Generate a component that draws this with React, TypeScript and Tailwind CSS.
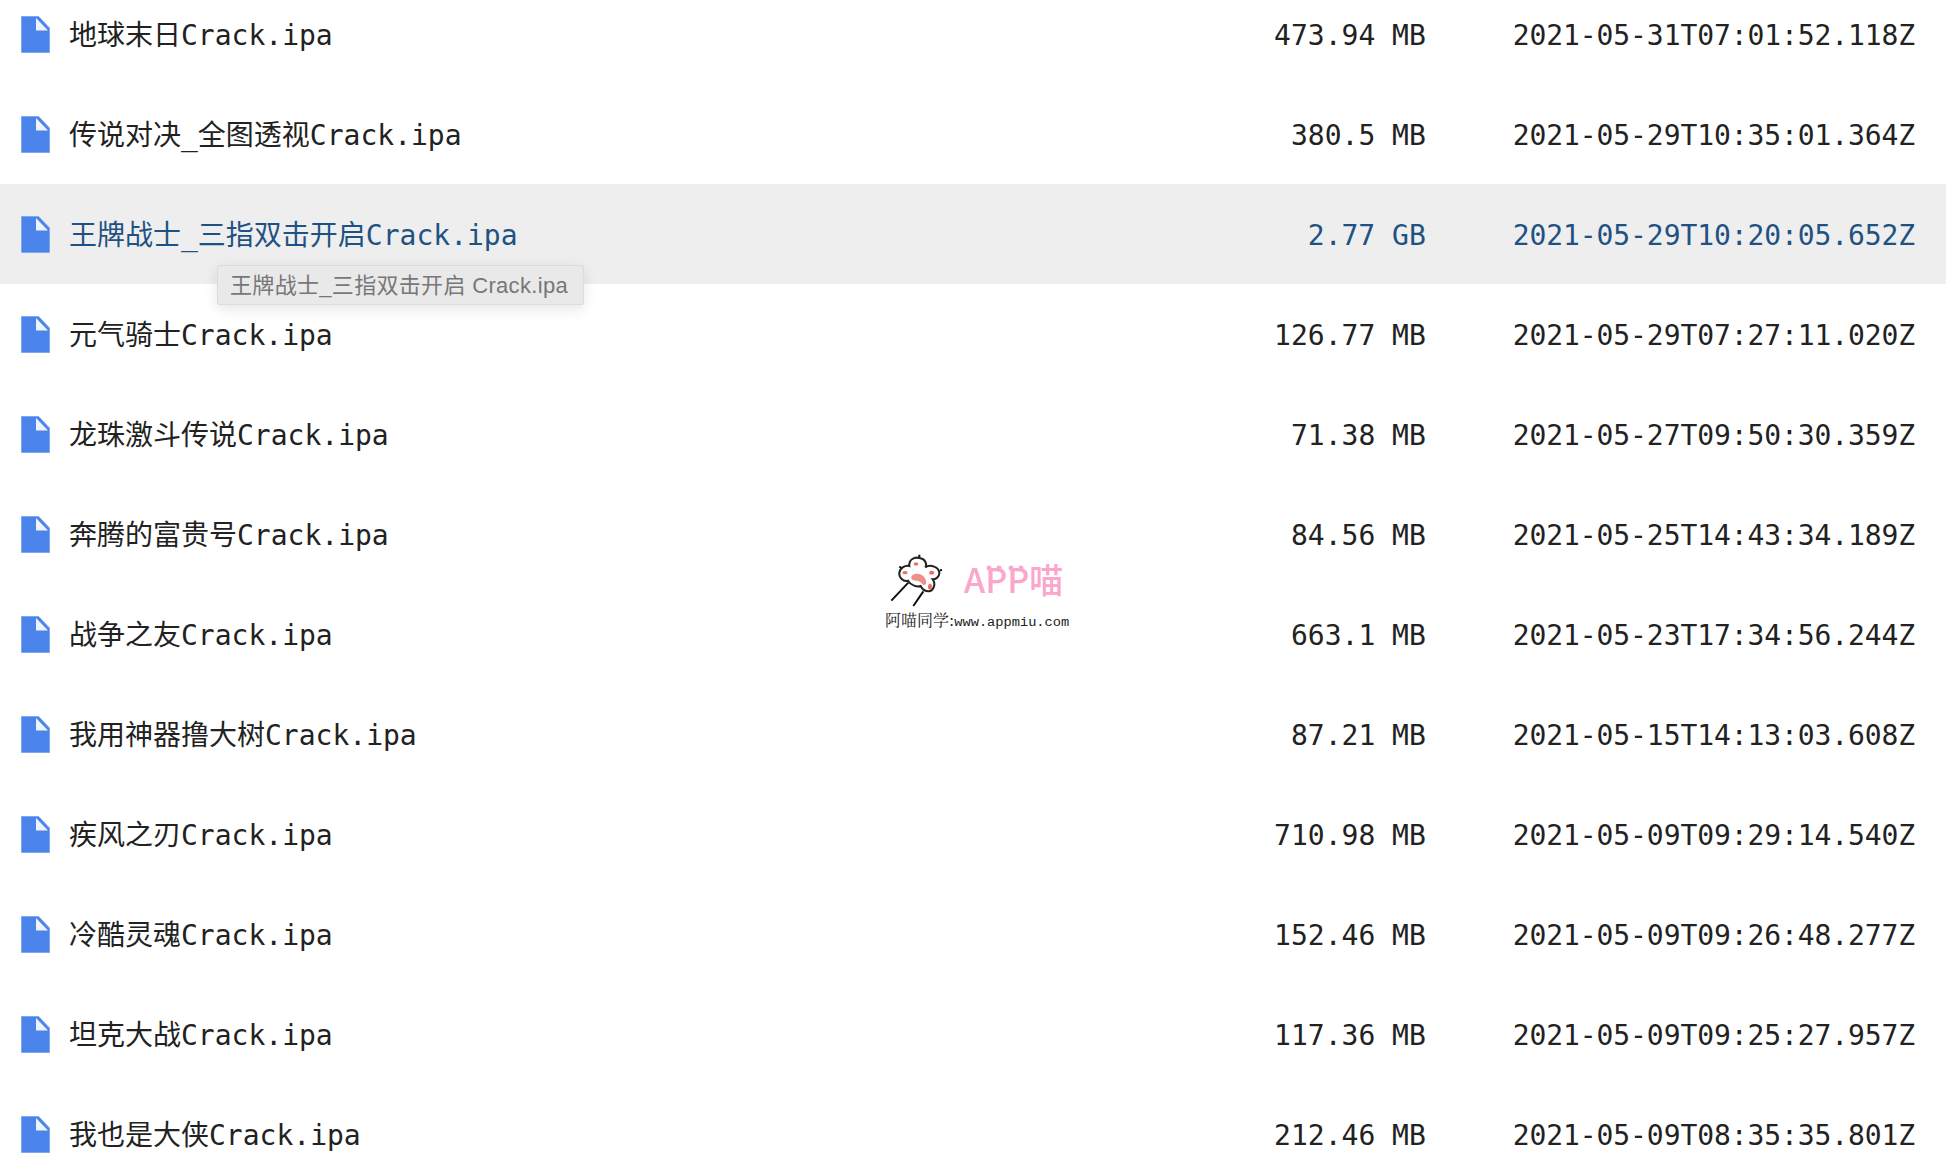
const files = [
  { name: '地球末日Crack.ipa', size: '473.94 MB', date: '2021-05-31T07:01:52.118Z' },
  { name: '传说对决_全图透视Crack.ipa', size: '380.5 MB', date: '2021-05-29T10:35:01.364Z' },
  { name: '王牌战士_三指双击开启Crack.ipa', size: '2.77 GB', date: '2021-05-29T10:20:05.652Z', hover: true },
  { name: '元气骑士Crack.ipa', size: '126.77 MB', date: '2021-05-29T07:27:11.020Z' },
  { name: '龙珠激斗传说Crack.ipa', size: '71.38 MB', date: '2021-05-27T09:50:30.359Z' },
  { name: '奔腾的富贵号Crack.ipa', size: '84.56 MB', date: '2021-05-25T14:43:34.189Z' },
  { name: '战争之友Crack.ipa', size: '663.1 MB', date: '2021-05-23T17:34:56.244Z' },
  { name: '我用神器撸大树Crack.ipa', size: '87.21 MB', date: '2021-05-15T14:13:03.608Z' },
  { name: '疾风之刃Crack.ipa', size: '710.98 MB', date: '2021-05-09T09:29:14.540Z' },
  { name: '冷酷灵魂Crack.ipa', size: '152.46 MB', date: '2021-05-09T09:26:48.277Z' },
  { name: '坦克大战Crack.ipa', size: '117.36 MB', date: '2021-05-09T09:25:27.957Z' },
  { name: '我也是大侠Crack.ipa', size: '212.46 MB', date: '2021-05-09T08:35:35.801Z' },
]

const FileIcon = () => (
  <svg width="29" height="37" viewBox="0 0 29 37" className="shrink-0">
    <path d="M.5.5h17.2L28.500 12v24.500H.5z" fill="#4a84ea" stroke="#7fa8f0" strokeWidth="1" />
    <path d="M15 2l12 12.500H15z" fill="#edf2fb" />
  </svg>
)

const Paw = () => (
  <svg width="84" height="60" viewBox="0 0 252 180" className="shrink-0">
    <path d="M34 152L85 98M100 168L130 124" stroke="#111" strokeWidth="6" fill="none" />
    <path
      d="M88 48C86 28 104 20 118 24C136 26 142 42 136 52C150 42 178 50 178 70C178 82 166 88 158 88C168 100 162 122 146 124C134 124 126 116 122 108C112 112 92 106 84 92C70 96 56 82 58 68C60 54 76 44 88 48Z"
      fill="#fff"
      stroke="#222"
      strokeWidth="6"
    />
    <path d="M94 80C98 68 122 68 132 80C142 92 140 108 130 104C124 100 122 94 112 92C102 92 92 90 94 80Z" fill="#ee8f8b" />
    <ellipse cx="75" cy="68" rx="8" ry="5" fill="#ee6f6a" />
    <ellipse cx="108" cy="42" rx="7" ry="5" fill="#ee6f6a" />
    <ellipse cx="155" cy="68" rx="8" ry="6" fill="#ee6f6a" />
    <ellipse cx="150" cy="110" rx="6" ry="9" fill="#ee6f6a" />
    <path d="M118 14v8M64 54l-6-4M180 62l6-3" stroke="#111" strokeWidth="6" />
  </svg>
)

const Watermark = () => (
  <div className="absolute left-[880px] top-[550px] w-[200px]">
    <div className="relative flex items-center">
      <Paw />
      <span className="pb-[2px] font-['Noto_Sans_CJK_SC',sans-serif] text-[34px] leading-[40px] font-medium text-[#fba6cb]">APP喵</span>
      <svg width="56" height="8" viewBox="0 0 56 8" className="absolute left-[105px] top-[14px]">
        <circle cx="4" cy="4" r="2.500" fill="#fba6cb" />
        <circle cx="14" cy="4" r="2.500" fill="#fba6cb" />
        <circle cx="26" cy="4" r="2.500" fill="#fba6cb" />
        <circle cx="36" cy="4" r="2.500" fill="#fba6cb" />
      </svg>
    </div>
    <div className="whitespace-nowrap pl-[5px] font-['Noto_Serif_CJK_SC','Noto_Sans_CJK_SC',serif] text-[16px] leading-[20px] text-[#222]">
      阿喵同学:<span className="font-['Liberation_Mono',monospace] text-[13.7px]">www.appmiu.com</span>
    </div>
  </div>
)

export default function App() {
  return (
    <div className="relative h-[1170px] w-[1950px] overflow-hidden bg-white font-['DejaVu_Sans_Mono','Noto_Sans_CJK_SC',monospace] text-[28px] text-[#222]">
      <div className="-mt-4">
        {files.map((file) => (
          <div
            key={file.name}
            className={`relative flex h-[100px] w-[1946px] items-center pl-[21px] pr-[31px] ${
              file.hover ? 'bg-[#eeeeee] text-[#1f5282]' : ''
            }`}
          >
            <FileIcon />
            <div className="flex flex-1 items-center pt-1">
              <span className="ml-[19px] flex-1 whitespace-nowrap">{file.name}</span>
              <span className="w-[220px] text-right">{file.size}</span>
              <span className="ml-[87px] whitespace-nowrap tracking-[-0.1px]">{file.date}</span>
            </div>
            {file.hover && (
              <div className="absolute left-[217px] top-[81px] z-10 flex h-[40px] w-[367px] items-center whitespace-nowrap rounded-[2px] border border-[#dcdcdc] bg-[#e9e9e9] pl-[12px] font-['Liberation_Sans','Noto_Sans_CJK_SC',sans-serif] text-[22px] tracking-[0.32px] text-[#777777] shadow-[0_4px_14px_rgba(0,0,0,0.1)]">
                王牌战士_三指双击开启 Crack.ipa
              </div>
            )}
          </div>
        ))}
      </div>
      <Watermark />
    </div>
  )
}
